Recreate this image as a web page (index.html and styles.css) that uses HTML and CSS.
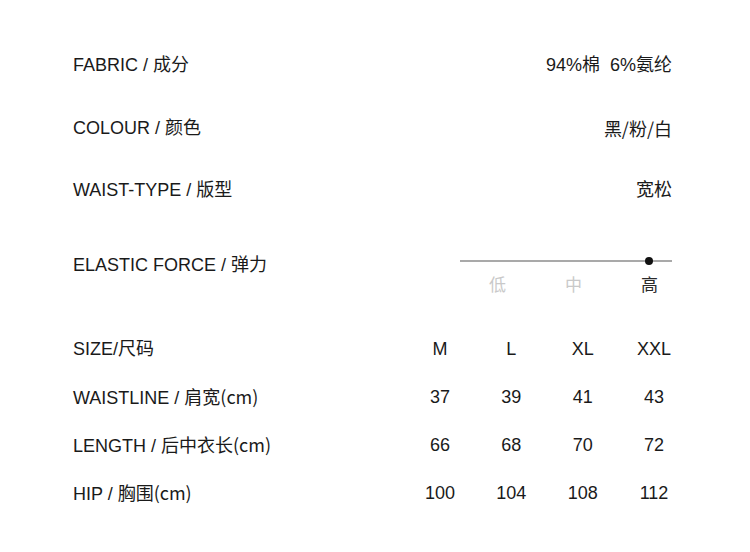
FILE: index.html
```html
<!DOCTYPE html>
<html lang="zh">
<head>
<meta charset="utf-8">
<title>Product details</title>
<link rel="stylesheet" href="styles.css">
</head>
<body>
<main class="page">
  <section class="specs">
    <div class="spec-row"><span class="label">FABRIC / 成分</span><span class="value">94%棉&nbsp;&nbsp;6%氨纶</span></div>
    <div class="spec-row"><span class="label">COLOUR / 颜色</span><span class="value cjk">黑/粉/白</span></div>
    <div class="spec-row"><span class="label">WAIST-TYPE / 版型</span><span class="value">宽松</span></div>
  </section>

  <section class="elastic">
    <span class="label">ELASTIC FORCE / 弹力</span>
    <div class="scale">
      <div class="track"><span class="dot"></span></div>
      <div class="ticks">
        <span class="tick">低</span>
        <span class="tick">中</span>
        <span class="tick active">高</span>
      </div>
    </div>
  </section>

  <section class="size-table">
    <div class="cell label">SIZE/尺码</div>
    <div class="cell num">M</div><div class="cell num">L</div><div class="cell num">XL</div><div class="cell num">XXL</div>

    <div class="cell label">WAISTLINE / 肩宽<span class="cjk">(cm)</span></div>
    <div class="cell num">37</div><div class="cell num">39</div><div class="cell num">41</div><div class="cell num">43</div>

    <div class="cell label">LENGTH / 后中衣长<span class="cjk">(cm)</span></div>
    <div class="cell num">66</div><div class="cell num">68</div><div class="cell num">70</div><div class="cell num">72</div>

    <div class="cell label">HIP / 胸围<span class="cjk">(cm)</span></div>
    <div class="cell num">100</div><div class="cell num">104</div><div class="cell num">108</div><div class="cell num">112</div>
  </section>
</main>
</body>
</html>
```

FILE: styles.css
```css
html, body {
  margin: 0;
  padding: 0;
  background: #ffffff;
}

body {
  font-family: "Liberation Sans", Arial, "Noto Sans CJK SC", sans-serif;
  font-size: 18px;
  line-height: 20px;
  color: #1a1a1a;
}

.cjk {
  font-family: "Noto Sans CJK SC", sans-serif;
}

.page {
  width: 599px;
  padding: 34px 0 0 73px;
}

.specs {
  display: flex;
  flex-direction: column;
}

.spec-row {
  height: 62.5px;
  display: flex;
  align-items: center;
  justify-content: space-between;
}

.value {
  white-space: nowrap;
}

.elastic {
  margin-top: 33.5px;
  display: flex;
  justify-content: space-between;
  align-items: flex-start;
}

.scale {
  width: 212px;
  padding-top: 5px;
}

.track {
  position: relative;
  height: 2px;
  background: #a9a9a9;
}

.dot {
  position: absolute;
  left: 185px;
  top: -3px;
  width: 8px;
  height: 8px;
  border-radius: 50%;
  background: #111111;
}

.ticks {
  margin-top: 14px;
  display: flex;
  gap: 59px;
  padding-left: 29px;
  font-size: 17px;
}

.tick {
  width: 17px;
  text-align: center;
  color: #c9c9c9;
}

.tick.active {
  color: #2a2a2a;
}

.size-table {
  margin-top: 29.5px;
  margin-right: -17.7px;
  display: grid;
  grid-template-columns: 1fr repeat(4, 71.33px);
  grid-auto-rows: 47.75px;
  align-items: center;
}

.num {
  text-align: center;
}
```
